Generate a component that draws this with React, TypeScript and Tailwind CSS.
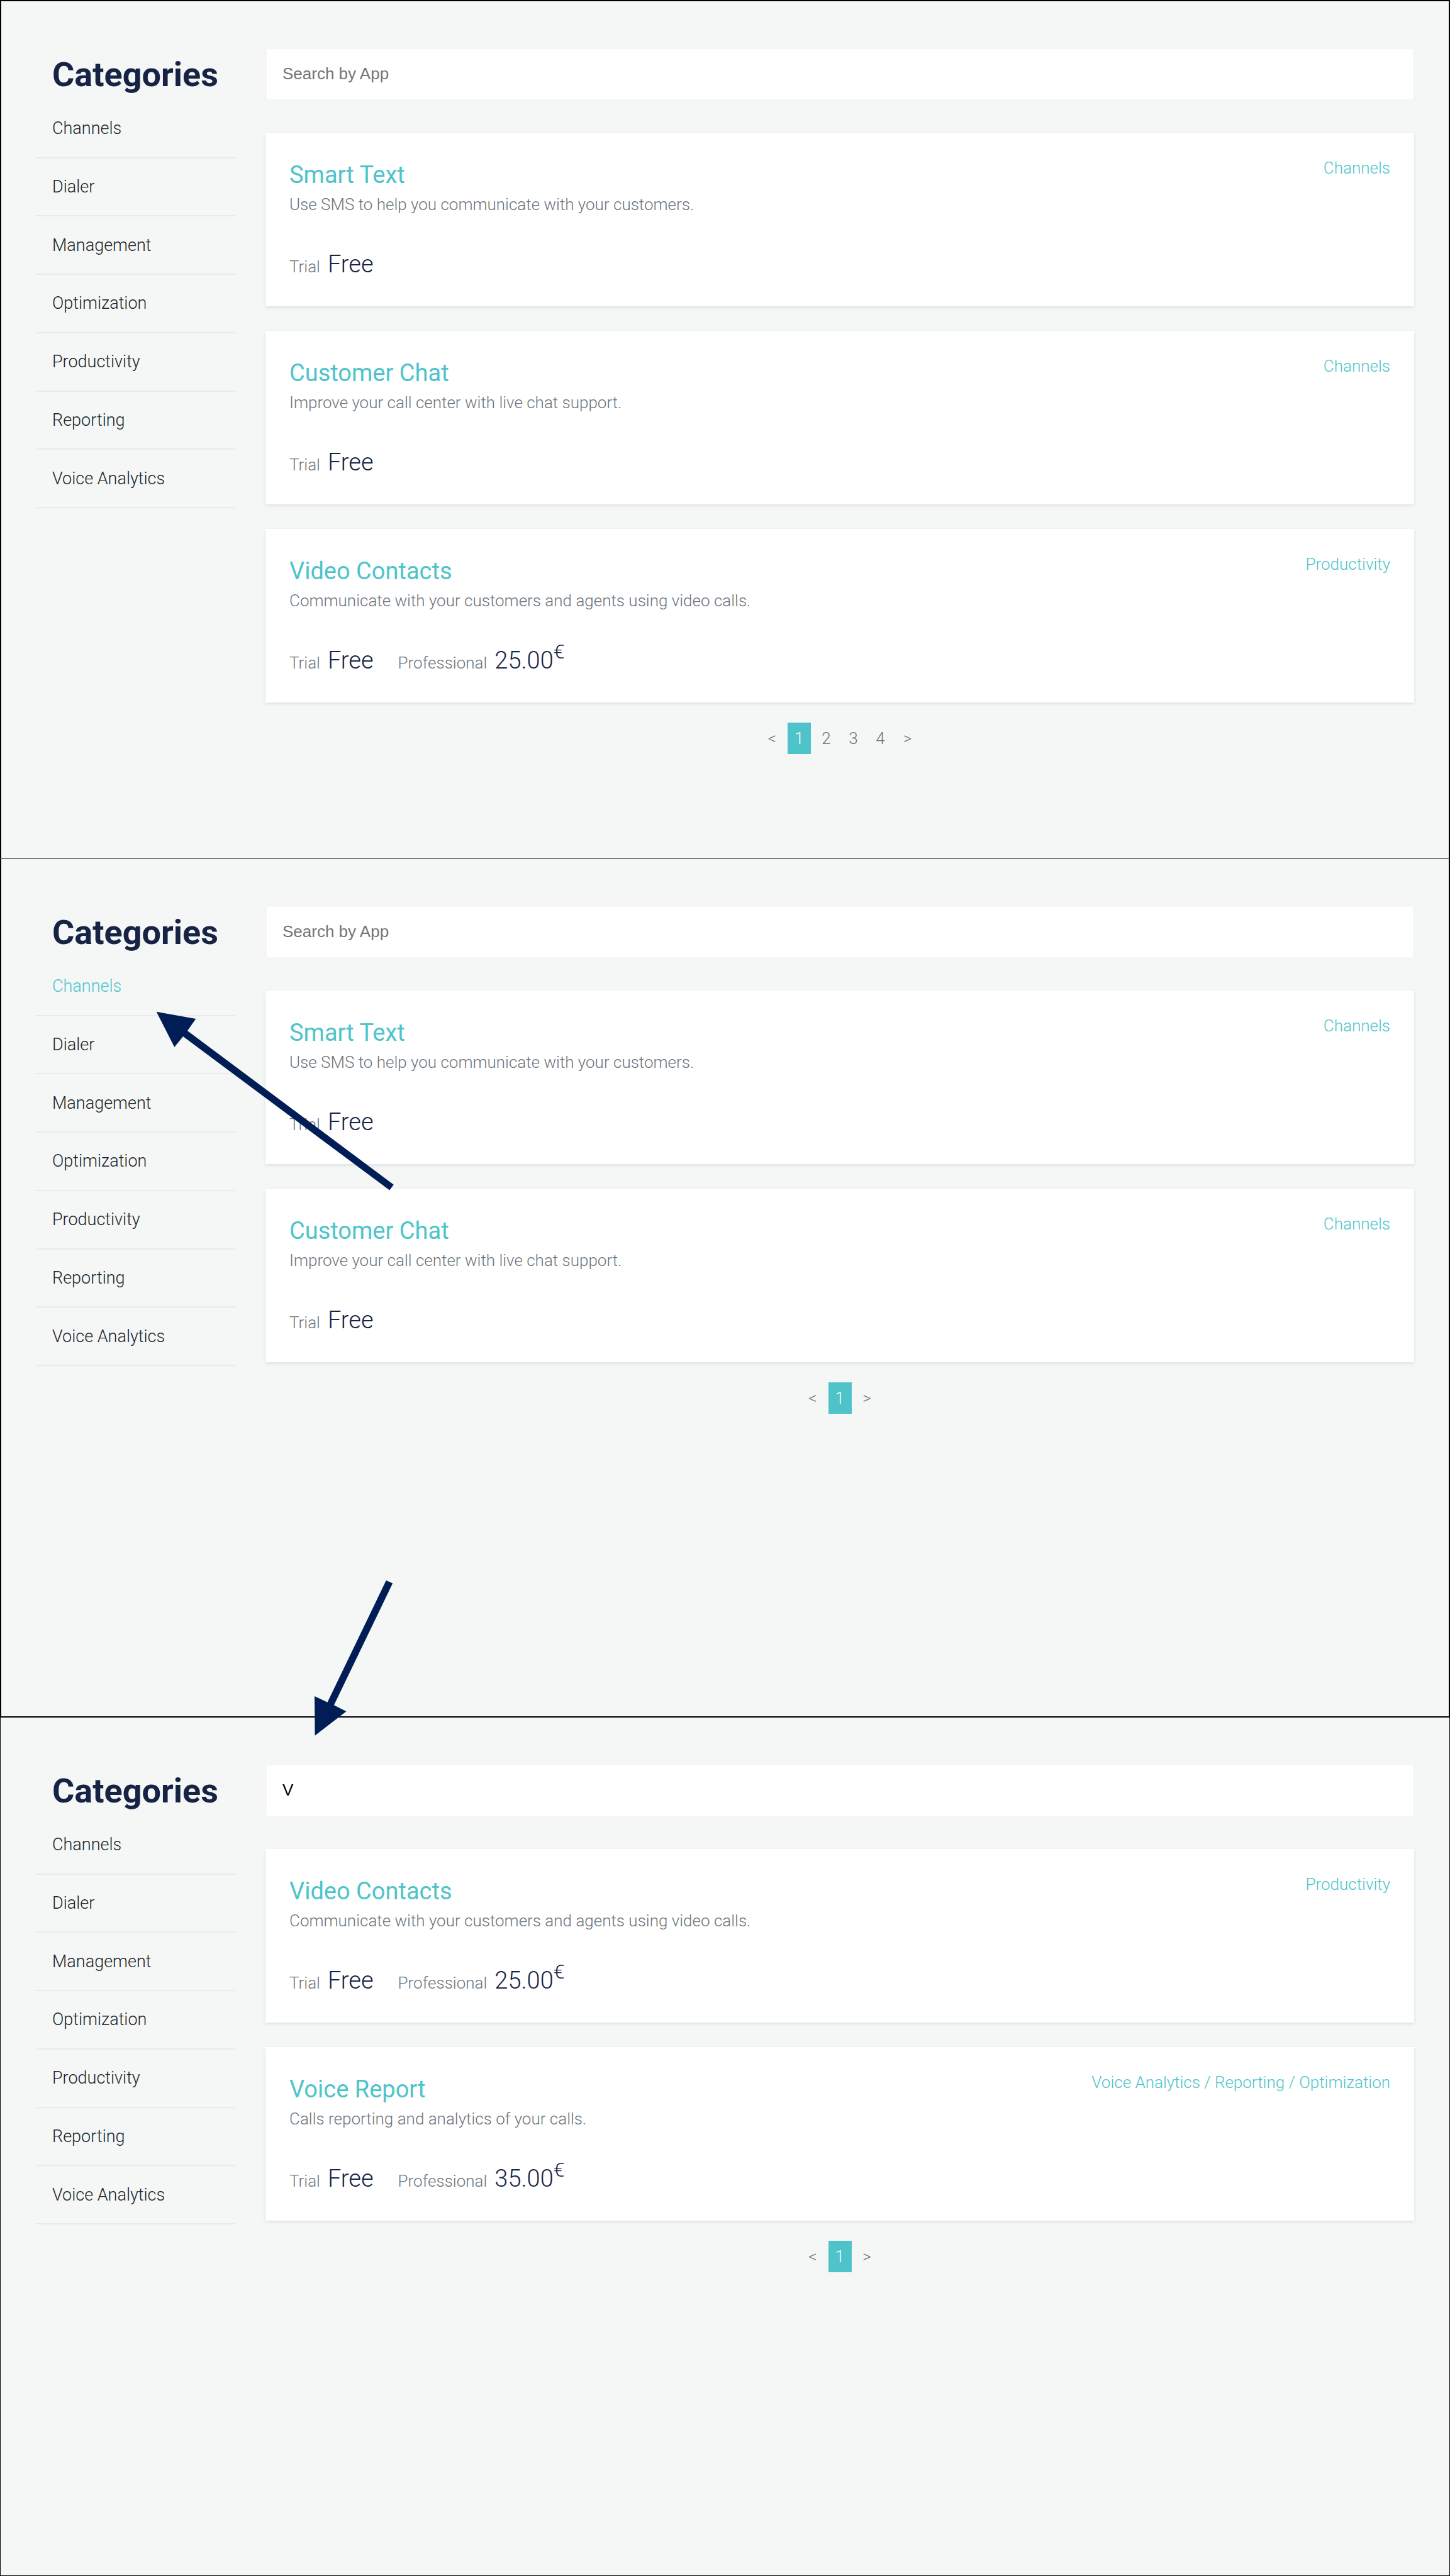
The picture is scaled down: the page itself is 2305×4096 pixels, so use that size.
type Plan = { name: string; price: string; currency?: string };
type AppEntry = { title: string; description: string; tags: string[]; plans: Plan[] };
type View = {
  id: string;
  active?: string;
  query: string;
  apps: AppEntry[];
  pages: number;
  frame: string;
};

const CATEGORIES = [
  "Channels",
  "Dialer",
  "Management",
  "Optimization",
  "Productivity",
  "Reporting",
  "Voice Analytics",
];

const TRIAL: Plan = { name: "Trial", price: "Free" };

const SMART_TEXT: AppEntry = {
  title: "Smart Text",
  description: "Use SMS to help you communicate with your customers.",
  tags: ["Channels"],
  plans: [TRIAL],
};

const CUSTOMER_CHAT: AppEntry = {
  title: "Customer Chat",
  description: "Improve your call center with live chat support.",
  tags: ["Channels"],
  plans: [TRIAL],
};

const VIDEO_CONTACTS: AppEntry = {
  title: "Video Contacts",
  description: "Communicate with your customers and agents using video calls.",
  tags: ["Productivity"],
  plans: [TRIAL, { name: "Professional", price: "25.00", currency: "€" }],
};

const VOICE_REPORT: AppEntry = {
  title: "Voice Report",
  description: "Calls reporting and analytics of your calls.",
  tags: ["Voice Analytics", "Reporting", "Optimization"],
  plans: [TRIAL, { name: "Professional", price: "35.00", currency: "€" }],
};

const VIEWS: View[] = [
  {
    id: "all",
    query: "",
    apps: [SMART_TEXT, CUSTOMER_CHAT, VIDEO_CONTACTS],
    pages: 4,
    frame: "min-h-[1364px] border-x-2 border-t-2 border-black px-[55px]",
  },
  {
    id: "filtered",
    active: "Channels",
    query: "",
    apps: [SMART_TEXT, CUSTOMER_CHAT],
    pages: 1,
    frame: "min-h-[1365px] border-x-2 border-t-2 border-x-black border-t-[#7b7c7c] px-[55px]",
  },
  {
    id: "searched",
    query: "V",
    apps: [VIDEO_CONTACTS, VOICE_REPORT],
    pages: 1,
    frame: "flex-1 border-x border-t-2 border-b border-black px-[56px]",
  },
];

function Sidebar({ active }: { active?: string }) {
  return (
    <nav aria-label="Categories" className="w-[317px] shrink-0">
      <h2 className="px-[26px] text-[54px] leading-[81px] font-bold text-[#172344]">Categories</h2>
      <ul className="grid h-[649px] grid-rows-7">
        {CATEGORIES.map((name) => (
          <li key={name} className="flex items-center border-b-2 border-[#e9ebeb] px-[26px]">
            <a
              href="#"
              aria-current={name === active ? "true" : undefined}
              className={
                name === active
                  ? "text-[27px] leading-[40px] text-[#4ec4ca]"
                  : "text-[27px] leading-[40px] text-[#212529]"
              }
            >
              {name}
            </a>
          </li>
        ))}
      </ul>
    </nav>
  );
}

function AppCard({ app }: { app: AppEntry }) {
  return (
    <article className="bg-white p-[38px] shadow-[0_2px_5px_rgba(40,50,90,0.11)]">
      <div className="flex items-start justify-between">
        <div>
          <h3 className="text-[38px] leading-[58px] font-normal text-[#4ec4ca]">{app.title}</h3>
          <p className="text-[26px] leading-[36px]">{app.description}</p>
        </div>
        <p className="text-[26px] leading-[36px] text-[#4ec4ca]">{app.tags.join(" / ")}</p>
      </div>
      <dl className="mt-12 flex gap-[39px]">
        {app.plans.map((plan) => (
          <div key={plan.name} className="flex items-baseline gap-3">
            <dt className="text-[26px] leading-[36px]">{plan.name}</dt>
            <dd className="text-[38px] leading-[58px] text-[#172344]">
              {plan.price}
              {plan.currency && <sup className="text-[32px]">{plan.currency}</sup>}
            </dd>
          </div>
        ))}
      </dl>
    </article>
  );
}

function Pagination({ pages }: { pages: number }) {
  const cell = "h-[50px] w-[37px] text-center text-[26px] leading-[50px]";
  return (
    <nav aria-label="Pagination" className="mt-8 flex justify-center gap-[6px]">
      <button type="button" aria-label="Previous page" className={cell}>
        &lt;
      </button>
      {Array.from({ length: pages }, (_, i) => (
        <button
          key={i}
          type="button"
          aria-current={i === 0 ? "page" : undefined}
          className={i === 0 ? `${cell} bg-[#4ec4ca] text-white` : cell}
        >
          {i + 1}
        </button>
      ))}
      <button type="button" aria-label="Next page" className={cell}>
        &gt;
      </button>
    </nav>
  );
}

function Arrows() {
  return (
    <svg
      aria-hidden="true"
      width="640"
      height="1400"
      viewBox="0 0 640 1400"
      fill="#001e55"
      className="pointer-events-none absolute -top-px -left-0.5 z-10"
    >
      <polygon points="248.7,243.8 311.3,255.1 298,274 625.8,518.7 619.3,527.6 291,283 277.3,300.1" />
      <polygon points="500.6,1394.7 500,1332 520.5,1341.7 613.8,1148.1 624.2,1152.6 530.9,1346.3 550.5,1356.2" />
    </svg>
  );
}

function Marketplace({ view }: { view: View }) {
  return (
    <section className={`relative flex gap-12 pt-[76px] pb-12 ${view.frame}`}>
      <Sidebar active={view.active} />
      <main className="min-w-0 flex-1">
        <div className="mx-0.5">
          <input
            type="text"
            aria-label="Search by App"
            placeholder="Search by App"
            defaultValue={view.query}
            className="block h-20 w-full bg-white px-[25px] pb-0.5 font-['Liberation_Sans',Arial,sans-serif] text-[26px] font-normal text-black outline-none placeholder:text-[#757575]"
          />
        </div>
        <div className="mt-[53px] flex flex-col gap-[39px]">
          {view.apps.map((app) => (
            <AppCard key={app.title} app={app} />
          ))}
        </div>
        <Pagination pages={view.pages} />
      </main>
      {view.id === "filtered" && <Arrows />}
    </section>
  );
}

export default function App() {
  return (
    <div className="flex min-h-screen flex-col bg-[#f4f7f6] font-['Roboto',sans-serif] font-light text-[#6c757d]">
      {VIEWS.map((view) => (
        <Marketplace key={view.id} view={view} />
      ))}
    </div>
  );
}
